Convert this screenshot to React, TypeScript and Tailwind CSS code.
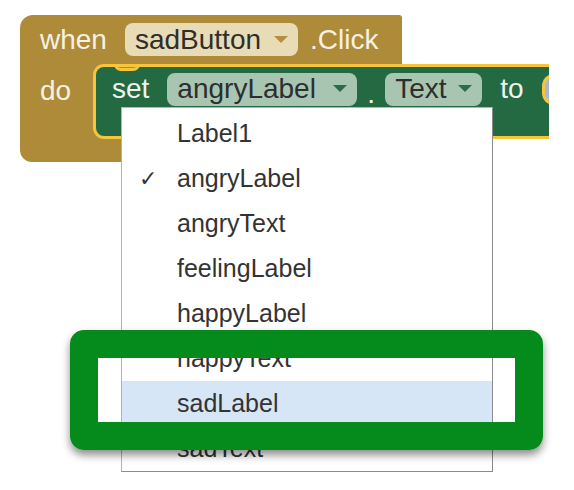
import React from "react";

const MUSTARD = "bg-[#ad8b39]";

type PillProps = {
  label: string;
  width: string;
  tone: "beige" | "green";
};

function Caret({ color }: { color: string }) {
  return (
    <svg width="14" height="8" viewBox="0 0 14 8" className="shrink-0">
      <path d="M0 0 L14 0 L7 7 Z" fill={color} />
    </svg>
  );
}

function Pill({ label, width, tone }: PillProps) {
  const bg = tone === "beige" ? "bg-[#e8dcb6]" : "bg-[#a7c5b1]";
  const caret = tone === "beige" ? "#b48e3a" : "#2c6d47";
  return (
    <div
      className={`${bg} ${width} h-[33px] rounded-[8px] flex items-center justify-between pl-[10px] pr-[10px] shrink-0`}
    >
      <span className="text-[28px] leading-none text-[#2e2e2e]">{label}</span>
      <Caret color={caret} />
    </div>
  );
}

const ITEMS = [
  "Label1",
  "angryLabel",
  "angryText",
  "feelingLabel",
  "happyLabel",
  "happyText",
  "sadLabel",
  "sadText",
];

function EventBlock() {
  return (
    <div className="pt-[15px] pl-[20px] flex flex-col">
      {/* when sadButton.Click */}
      <div
        className={`${MUSTARD} w-[382px] h-[49px] rounded-tl-[13px] rounded-tr-[3px] flex items-center pl-[20px]`}
      >
        <span className="text-[28px] leading-none text-[#f6f1e4] mr-[18px]">when</span>
        <Pill label="sadButton" width="w-[173px]" tone="beige" />
        <span className="text-[28px] leading-none text-[#f6f1e4] ml-[12px]">.Click</span>
      </div>

      {/* do + set block */}
      <div className="flex h-[75px]">
        <div className={`${MUSTARD} w-[83px] h-full pl-[20px] pt-[13px] shrink-0`}>
          <span className="text-[28px] leading-none text-[#f6f1e4]">do</span>
        </div>
        <div className="relative z-10 ml-[-10px] w-[456px] h-[75px] bg-[#236a43] border-[3px] border-r-0 border-[#f6c53b] rounded-l-[11px] overflow-hidden">
          {/* notch */}
          <div
            className={`absolute top-[-3px] left-[18px] w-[26px] h-[7px] ${MUSTARD} border-[3px] border-t-0 border-[#f6c53b] rounded-b-[8px]`}
          />
          <div className="flex items-center h-[32px] mt-[6px] pl-[16px]">
            <span className="text-[28px] leading-none text-[#eef2ee] mr-[18px]">set</span>
            <Pill label="angryLabel" width="w-[190px]" tone="green" />
            <span className="text-[28px] leading-none text-[#eef2ee] mx-[10px] mt-[10px]">.</span>
            <Pill label="Text" width="w-[97px]" tone="green" />
            <span className="text-[28px] leading-none text-[#eef2ee] ml-[18px]">to</span>
            <div className="ml-[18px] w-[30px] h-[31px] rounded-l-[12px] border-[3px] border-r-0 border-[#f6c53b] bg-[#a9b7d7] shrink-0" />
          </div>
        </div>
      </div>

      {/* bottom arm */}
      <div className={`${MUSTARD} w-[180px] h-[23px] rounded-bl-[12px]`} />
    </div>
  );
}

function DropdownMenu() {
  return (
    <div className="absolute left-[121px] top-[107px] w-[372px] h-[365px] bg-white border border-[#b4b4b4] border-r-[#8c8c8c] border-b-[#8c8c8c] pt-[3px] z-20">
      {ITEMS.map((item) => (
        <div
          key={item}
          className={`relative h-[45px] flex items-center pl-[55px] ${
            item === "sadLabel" ? "bg-[#d6e6f6]" : ""
          }`}
        >
          {item === "angryLabel" && (
            <span className="absolute left-[17px] text-[22px] leading-none text-[#333] font-['DejaVu_Sans',sans-serif]">
              ✓
            </span>
          )}
          <span className="text-[25px] leading-none text-[#333]">{item}</span>
        </div>
      ))}
    </div>
  );
}

export default function App() {
  return (
    <div className="relative w-[574px] h-[490px] bg-white overflow-hidden font-['Liberation_Sans',Arial,sans-serif]">
      <EventBlock />
      <DropdownMenu />
      {/* green highlight frame */}
      <div className="absolute left-[70px] top-[330px] w-[473px] h-[120px] border-[28px] border-[#058b1b] rounded-[14px] shadow-[0_5px_8px_rgba(0,0,0,0.45)] z-30" />
    </div>
  );
}
